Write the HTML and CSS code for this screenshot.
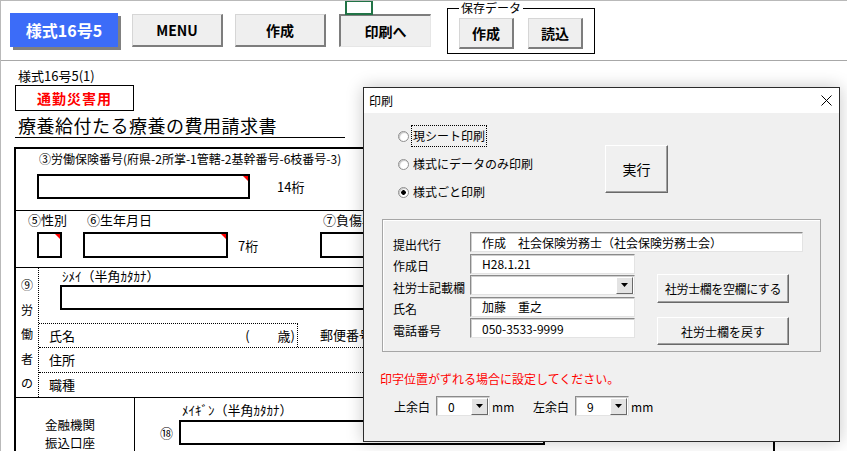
FILE: index.html
```html
<!DOCTYPE html>
<html lang="ja">
<head>
    <meta charset="UTF-8">
    <meta name="viewport" content="width=device-width, initial-scale=1.0">
    <title>様式16号5 - 印刷</title>
    <link rel="stylesheet" href="styles.css">
</head>
<body>
    <!-- ツールバー -->
    <div class="toolbar">
        <button class="btn-form">様式16号5</button>
        <button class="btn btn-menu">MENU</button>
        <button class="btn btn-create">作成</button>
        <button class="btn btn-print">印刷へ</button>
        <div class="save-group">
            <span class="save-label">保存データ</span>
            <button class="btn btn-small">作成</button>
            <button class="btn btn-small">読込</button>
        </div>
        <div class="cell-cursor"></div>
    </div>

    <!-- シート -->
    <div class="sheet">
        <div class="form-no">様式16号5(1)</div>
        <div class="commute">通勤災害用</div>
        <div class="form-title">療養給付たる療養の費用請求書</div>

        <div class="form-table">
            <div class="row row-ins">
                <div class="ins-label">③労働保険番号(府県-2所掌-1管轄-2基幹番号-6枝番号-3)</div>
                <div class="ins-line">
                    <div class="box marked ins-box"></div>
                    <span class="note">14桁</span>
                </div>
            </div>

            <div class="row row-birth">
                <div class="birth-labels">
                    <span class="lbl-sex">⑤性別</span>
                    <span class="lbl-birth">⑥生年月日</span>
                    <span>⑦負傷年月日</span>
                </div>
                <div class="birth-line">
                    <div class="box marked sex-box"></div>
                    <div class="box marked birth-box"></div>
                    <span class="birth-note">7桁</span>
                    <div class="box injury-box"></div>
                </div>
            </div>

            <div class="row row-worker">
                <div class="worker-side">
                    <span>⑨</span><span>労</span><span>働</span><span>者</span><span>の</span>
                </div>
                <div class="worker-main">
                    <div class="kana-label">ｼﾒｲ（半角ｶﾀｶﾅ）</div>
                    <div class="box kana-box"></div>
                    <div class="name-row">
                        <div class="name-cell">
                            <span>氏名</span>
                            <span class="age">(<span class="age-gap"></span>歳)</span>
                        </div>
                        <span class="postal">郵便番号</span>
                    </div>
                    <div class="dot-row">住所</div>
                    <div class="dot-row">職種</div>
                </div>
            </div>

            <div class="row row-bank">
                <div class="bank-label">
                    <div>金融機関</div>
                    <div>振込口座</div>
                </div>
                <div class="bank-main">
                    <div class="bank-kana">ﾒｲｷﾞﾝ（半角ｶﾀｶﾅ）</div>
                    <div class="bank-line">
                        <span class="bank-no">⑱</span>
                        <div class="box bank-box"></div>
                    </div>
                </div>
            </div>
        </div>
    </div>

    <!-- 印刷ダイアログ -->
    <div class="dialog">
        <div class="dlg-title">
            <span>印刷</span>
            <svg class="dlg-close" width="11" height="11" viewBox="0 0 11 11">
                <path d="M0.5 0.5L10.5 10.5M10.5 0.5L0.5 10.5" stroke="#000" stroke-width="1" fill="none"/>
            </svg>
        </div>
        <div class="dlg-body">
            <div class="dlg-top">
                <div class="radios">
                    <label class="radio"><span class="radio-dot"></span><span class="radio-text focused">現シート印刷</span></label>
                    <label class="radio"><span class="radio-dot"></span><span class="radio-text">様式にデータのみ印刷</span></label>
                    <label class="radio"><span class="radio-dot checked"></span><span class="radio-text">様式ごと印刷</span></label>
                </div>
                <button class="dlg-btn btn-run">実行</button>
            </div>

            <div class="frame">
                <div class="fields">
                    <div class="field-row">
                        <span class="field-label">提出代行</span>
                        <div class="field field-wide">作成　社会保険労務士（社会保険労務士会）</div>
                    </div>
                    <div class="field-row">
                        <span class="field-label">作成日</span>
                        <div class="field">H28.1.21</div>
                    </div>
                    <div class="field-row">
                        <span class="field-label">社労士記載欄</span>
                        <div class="field combo">
                            <span class="dd"><svg width="7" height="4" viewBox="0 0 7 4"><path d="M0 0H7L3.5 4Z" fill="#000"/></svg></span>
                        </div>
                    </div>
                    <div class="field-row">
                        <span class="field-label">氏名</span>
                        <div class="field">加藤　重之</div>
                    </div>
                    <div class="field-row">
                        <span class="field-label">電話番号</span>
                        <div class="field">050-3533-9999</div>
                    </div>
                </div>
                <div class="side-btns">
                    <button class="dlg-btn btn-clear">社労士欄を空欄にする</button>
                    <button class="dlg-btn btn-back">社労士欄を戻す</button>
                </div>
            </div>

            <div class="warn">印字位置がずれる場合に設定してください。</div>

            <div class="margins">
                <span>上余白</span>
                <div class="field combo margin-combo">
                    <span class="combo-val">0</span>
                    <span class="dd"><svg width="7" height="4" viewBox="0 0 7 4"><path d="M0 0H7L3.5 4Z" fill="#000"/></svg></span>
                </div>
                <span class="unit">mm</span>
                <span class="left-label">左余白</span>
                <div class="field combo margin-combo">
                    <span class="combo-val">9</span>
                    <span class="dd"><svg width="7" height="4" viewBox="0 0 7 4"><path d="M0 0H7L3.5 4Z" fill="#000"/></svg></span>
                </div>
                <span class="unit">mm</span>
            </div>
        </div>
    </div>
</body>
</html>
```

FILE: styles.css
```css
* {
    margin: 0;
    padding: 0;
    box-sizing: border-box;
}

body {
    font-family: "Noto Sans CJK JP", sans-serif;
    font-size: 12px;
    color: #000;
    background: #fff;
    border-top: 1px solid #b9b9b9;
    border-left: 1px solid #b9b9b9;
    height: 451px;
    overflow: hidden;
    position: relative;
}

button {
    font-family: "Noto Sans CJK JP", sans-serif;
    color: #000;
    cursor: pointer;
}

/* ツールバー */
.toolbar {
    position: relative;
    display: flex;
    align-items: flex-start;
    height: 60px;
    padding: 12px 0 0 9px;
    border-bottom: 1px solid #a8a8a8;
}

.btn-form {
    width: 108px;
    height: 34px;
    background: #3c6cf8;
    color: #fff;
    border: none;
    font-size: 16px;
    font-weight: bold;
    box-shadow: 3px 3px 0 #808080;
}

.btn {
    height: 33px;
    margin-top: 1px;
    background: #efefef;
    border-style: solid;
    border-width: 1px 2px 2px 1px;
    border-color: #d6d6d6 #7d7d7d #7d7d7d #d6d6d6;
    font-size: 14px;
    font-weight: bold;
}

.btn-menu {
    width: 91px;
    margin-left: 14px;
}

.btn-create {
    width: 91px;
    margin-left: 12px;
}

.btn-print {
    width: 92px;
    margin-left: 13px;
    border-width: 2px 1px 1px 2px;
    border-color: #7d7d7d #e6e6e6 #e6e6e6 #7d7d7d;
}

.save-group {
    position: relative;
    display: flex;
    gap: 14px;
    width: 148px;
    height: 46px;
    margin: -5px 0 0 16px;
    padding: 9px 0 0 11px;
    border: 1px solid #000;
}

.save-label {
    position: absolute;
    top: -8px;
    left: 11px;
    padding: 0 2px;
    background: #fff;
    font-size: 12px;
    line-height: 14px;
}

.btn-small {
    width: 55px;
    height: 31px;
    margin-top: 0;
}

.cell-cursor {
    position: absolute;
    left: 344px;
    top: -1px;
    width: 28px;
    height: 15px;
    border: 2px solid #217346;
}

/* シート */
.sheet {
    padding-left: 13px;
}

.form-no {
    margin: 6px 0 0 4px;
    font-size: 13px;
    line-height: 18px;
}

.commute {
    width: 119px;
    height: 26px;
    margin-left: 1px;
    border: 1px solid #000;
    color: #ff0000;
    font-size: 14px;
    font-weight: bold;
    line-height: 24px;
    letter-spacing: 1px;
    text-align: center;
}

.form-title {
    width: 330px;
    height: 24px;
    margin: 3px 0 0 1px;
    padding-left: 3px;
    border-bottom: 1px solid #000;
    font-size: 18px;
    line-height: 23px;
    letter-spacing: 0.5px;
    white-space: nowrap;
}

.form-table {
    width: 761px;
    margin-top: 9px;
    border: 2px solid #000;
    border-bottom: none;
}

.row {
    border-bottom: 1px solid #000;
}

.box {
    position: relative;
    border: 2px solid #000;
    background: #fff;
}

.box.marked::after {
    content: "";
    position: absolute;
    top: 0;
    right: 0;
    border-top: 5px solid #ff0000;
    border-left: 5px solid transparent;
}

.row-ins {
    height: 62px;
}

.ins-label {
    padding: 2px 0 0 23px;
    line-height: 16px;
    white-space: nowrap;
}

.ins-line {
    display: flex;
    align-items: center;
    margin-top: 7px;
    padding-left: 21px;
}

.ins-box {
    width: 213px;
    height: 25px;
}

.note {
    margin-left: 27px;
    font-size: 13px;
}

.row-birth {
    height: 57px;
}

.birth-labels {
    display: flex;
    padding: 1px 0 0 12px;
    line-height: 16px;
    font-size: 13px;
    white-space: nowrap;
}

.lbl-sex {
    width: 59px;
}

.lbl-birth {
    width: 236px;
}

.birth-line {
    display: flex;
    align-items: center;
    margin-top: 4px;
    padding-left: 21px;
}

.sex-box {
    width: 25px;
    height: 26px;
}

.birth-box {
    width: 145px;
    height: 26px;
    margin-left: 21px;
}

.birth-note {
    width: 92px;
    padding-left: 10px;
    font-size: 13px;
}

.injury-box {
    width: 160px;
    height: 26px;
}

.row-worker {
    display: flex;
    height: 130px;
}

.worker-side {
    display: flex;
    flex-direction: column;
    align-items: center;
    width: 23px;
    padding-top: 5px;
    border-right: 1px dotted #000;
    line-height: 24.5px;
}

.worker-main {
    flex: 1;
}

.kana-label {
    padding-left: 23px;
    font-size: 13px;
    line-height: 16px;
}

.kana-box {
    width: 690px;
    height: 25px;
    margin: 1px 0 0 21px;
}

.name-row {
    display: flex;
    height: 24px;
    margin-top: 13px;
    line-height: 23px;
    font-size: 13px;
}

.name-cell {
    display: flex;
    width: 259px;
    padding: 0 2px 0 10px;
    border-top: 1px dotted #000;
    border-right: 1px dotted #000;
}

.age {
    margin-left: auto;
}

.age-gap {
    display: inline-block;
    width: 28px;
}

.postal {
    margin-left: 22px;
}

.dot-row {
    height: 25px;
    padding-left: 10px;
    border-top: 1px dotted #000;
    font-size: 13px;
    line-height: 24px;
}

.row-bank {
    display: flex;
    height: 80px;
    border-bottom: none;
}

.bank-label {
    width: 119px;
    padding: 18px 0 0 29px;
    border-right: 1px solid #000;
    font-size: 12.5px;
    line-height: 18px;
}

.bank-main {
    flex: 1;
}

.bank-kana {
    padding: 4px 0 0 47px;
    font-size: 13px;
    line-height: 16px;
}

.bank-line {
    display: flex;
    align-items: center;
    margin-top: 2px;
}

.bank-no {
    width: 44px;
    padding-left: 25px;
    font-size: 13px;
}

.bank-box {
    width: 366px;
    height: 25px;
}

/* ダイアログ */
.dialog {
    position: absolute;
    left: 362px;
    top: 86px;
    width: 477px;
    height: 355px;
    background: #f0f0f0;
    border: 1px solid #2b2b2b;
    box-shadow: 0 0 16px rgba(0, 0, 0, 0.22);
}

.dlg-title {
    display: flex;
    align-items: center;
    height: 25px;
    padding: 0 7px 0 5px;
    background: #fff;
    font-size: 12px;
}

.dlg-close {
    margin-left: auto;
}

.dlg-top {
    display: flex;
    height: 106px;
}

.radios {
    width: 241px;
    padding: 9px 0 0 34px;
}

.radio {
    display: flex;
    align-items: center;
    height: 28px;
    font-size: 12px;
}

.radio-dot {
    width: 11px;
    height: 11px;
    border-radius: 50%;
    border: 1px solid #8f8f8f;
    background: #fff;
    box-shadow: inset 1px 1px 1px #c4c4c4;
}

.radio-dot.checked {
    background: radial-gradient(circle, #000 2px, #fff 2.6px);
}

.radio-text {
    margin-left: 3px;
    padding: 2px 1px;
    line-height: 16px;
}

.radio-text.focused {
    outline: 1px dotted #000;
}

.dlg-btn {
    background: #f0f0f0;
    border: 1px solid;
    border-color: #fff #696969 #696969 #fff;
    box-shadow: inset -1px -1px 0 #a0a0a0;
    font-size: 12px;
    white-space: nowrap;
}

.btn-run {
    width: 63px;
    height: 48px;
    margin-top: 32px;
    font-size: 14px;
}

.frame {
    display: flex;
    width: 439px;
    height: 133px;
    margin-left: 18px;
    padding: 12px 0 0 10px;
    border: 1px solid #a6a6a6;
    box-shadow: inset 1px 1px 0 #fff;
}

.fields {
    display: flex;
    flex-direction: column;
    gap: 1.5px;
    width: 242px;
}

.field-row {
    display: flex;
    align-items: center;
    height: 20px;
}

.field-label {
    width: 77px;
    flex-shrink: 0;
    padding-top: 4px;
    font-size: 12px;
    white-space: nowrap;
}

.field {
    display: flex;
    align-items: center;
    width: 165px;
    height: 20px;
    flex-shrink: 0;
    padding-left: 11px;
    background: #fff;
    border: 1px solid;
    border-color: #8a8a8a #e3e3e3 #e3e3e3 #8a8a8a;
    box-shadow: inset 1px 1px 0 #cfcfcf;
    font-size: 12px;
    white-space: nowrap;
}

.field-wide {
    width: 333px;
}

.combo {
    padding-right: 1px;
}

.dd {
    display: flex;
    align-items: center;
    justify-content: center;
    width: 17px;
    height: 17px;
    margin-left: auto;
    background: #e3e3e3;
    border: 1px solid;
    border-color: #fff #696969 #696969 #fff;
}

.side-btns {
    display: flex;
    flex-direction: column;
    gap: 14px;
    margin-left: 22px;
    padding-top: 42px;
}

.btn-clear {
    width: 132px;
    height: 29px;
    letter-spacing: -0.4px;
}

.btn-back {
    width: 132px;
    height: 28px;
}

.warn {
    margin: 19px 0 0 16px;
    color: #ff0000;
    font-size: 12px;
    line-height: 16px;
}

.margins {
    display: flex;
    align-items: center;
    height: 20px;
    margin-top: 9px;
    padding-left: 30px;
    font-size: 12px;
}

.margin-combo {
    width: 54px;
    margin-left: 6px;
}

.unit {
    margin-left: 2px;
    width: 20px;
}

.left-label {
    margin-left: 21px;
}
```
